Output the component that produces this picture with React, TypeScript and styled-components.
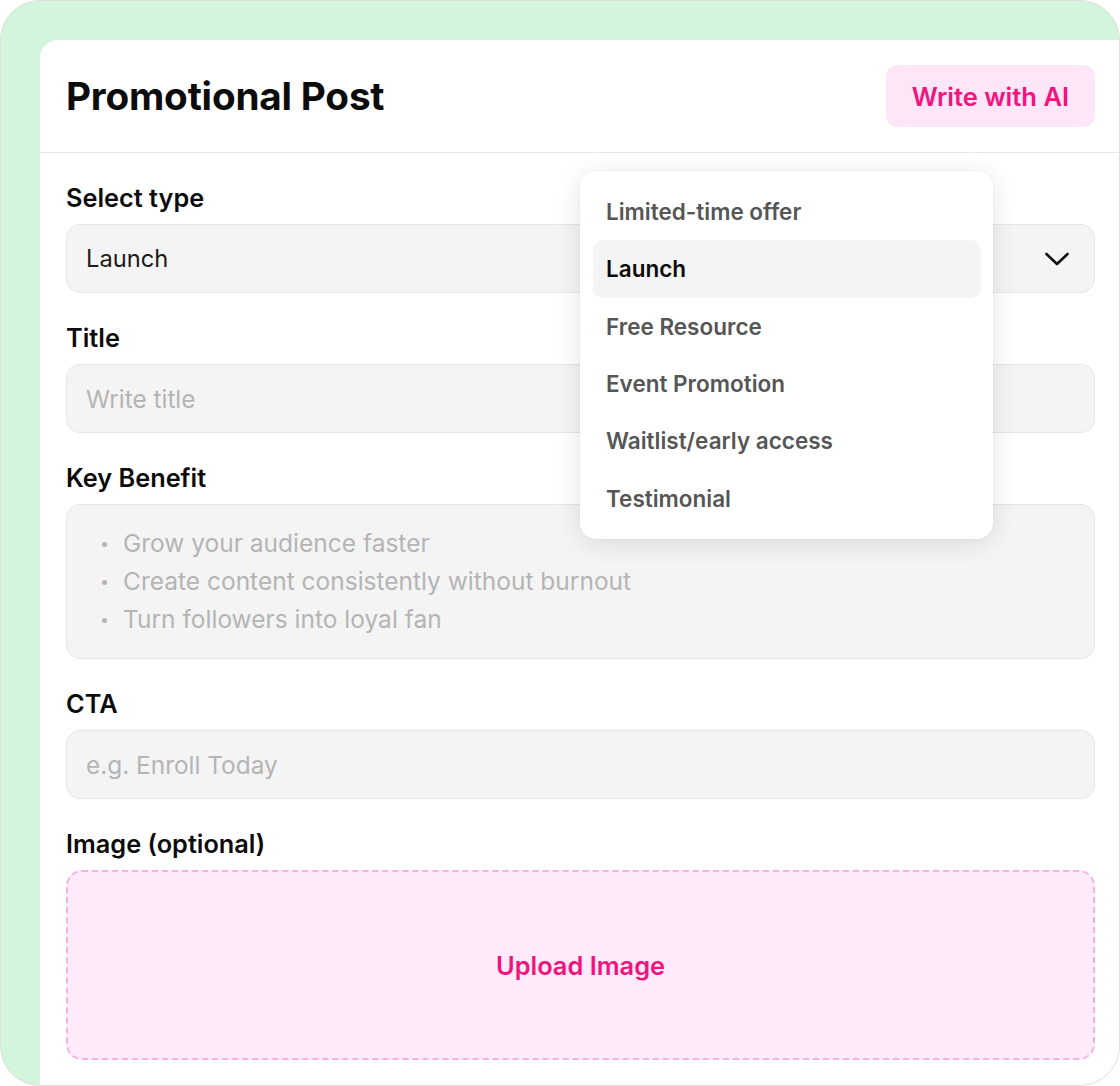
import styled, { createGlobalStyle } from 'styled-components'

const GlobalStyle = createGlobalStyle`
  html, body {
    margin: 0;
    padding: 0;
    background: #ffffff;
  }
  body {
    font-family: Inter, "Noto Sans", "Liberation Sans", sans-serif;
  }
  * {
    box-sizing: border-box;
  }
`

const Frame = styled.div`
  width: 1120px;
  height: 1086px;
  background: #d3f5dc;
  border: 1px solid #dedede;
  border-radius: 40px;
  padding: 39px 0 0 39px;
  overflow: hidden;
  display: flex;
`

const Card = styled.div`
  flex: 1;
  background: #ffffff;
  border-top-left-radius: 18px;
  display: flex;
  flex-direction: column;
`

const Header = styled.div`
  height: 113px;
  display: flex;
  align-items: center;
  justify-content: space-between;
  padding: 0 24px 0 26px;
  border-bottom: 1px solid #e6e6e6;
`

const Title = styled.h1`
  margin: 0;
  font-size: 38.7px;
  font-weight: 700;
  color: #0c0c0c;
  letter-spacing: -0.2px;
`

const AiButton = styled.button`
  height: 62px;
  padding: 0 26px;
  border: none;
  border-radius: 12px;
  background: #fde6f7;
  color: #f0147c;
  font-family: inherit;
  font-size: 25.5px;
  font-weight: 600;
  cursor: pointer;
`

const Body = styled.div`
  position: relative;
  display: flex;
  flex-direction: column;
  gap: 31px;
  padding: 31px 24px 24px 26px;
`

const Field = styled.div`
  display: flex;
  flex-direction: column;
  gap: 13px;
`

const Label = styled.label`
  font-size: 25.3px;
  line-height: 27px;
  font-weight: 600;
  color: #0c0c0c;
`

const Box = styled.div`
  height: 69px;
  display: flex;
  align-items: center;
  justify-content: space-between;
  padding: 0 24px 0 19px;
  background: #f4f4f4;
  border: 1px solid #e6e6e6;
  border-radius: 14px;
  font-size: 23.7px;
  color: #1c1c1c;
`

const Input = styled.input`
  height: 69px;
  padding: 0 19px;
  background: #f4f4f4;
  border: 1px solid #e6e6e6;
  border-radius: 14px;
  font-family: inherit;
  font-size: 24.4px;
  color: #1c1c1c;
  outline: none;

  &::placeholder {
    color: #b4b4b4;
  }
`

const TextArea = styled.div`
  height: 155px;
  padding: 19px 19px 0 33px;
  background: #f4f4f4;
  border: 1px solid #e6e6e6;
  border-radius: 14px;
`

const BulletItem = styled.div`
  display: flex;
  align-items: center;
  height: 38px;
  font-size: 24.5px;
  color: #b4b4b4;

  &::before {
    content: '•';
    width: 23px;
    font-size: 16px;
  }
`

const Upload = styled.div`
  height: 190px;
  display: flex;
  align-items: center;
  justify-content: center;
  background: #fdeafb;
  border: 2px dashed #f5b0e4;
  border-radius: 16px;
  color: #f0147c;
  font-size: 25.4px;
  font-weight: 600;
`

const Menu = styled.div`
  position: absolute;
  top: 18px;
  left: 540px;
  width: 413px;
  padding: 12px 12px 12px 13px;
  background: #ffffff;
  border-radius: 16px;
  box-shadow: 0 4px 26px rgba(0, 0, 0, 0.11), 0 0 0 1px rgba(0, 0, 0, 0.02);
  display: flex;
  flex-direction: column;
`

const MenuItem = styled.div<{ $active?: boolean }>`
  height: 57.3px;
  display: flex;
  align-items: center;
  padding: 0 13px;
  border-radius: 10px;
  font-size: 22.5px;
  font-weight: 600;
  color: ${(p) => (p.$active ? '#0c0c0c' : '#565656')};
  background: ${(p) => (p.$active ? '#f4f4f4' : 'transparent')};
`

const types = [
  'Limited-time offer',
  'Launch',
  'Free Resource',
  'Event Promotion',
  'Waitlist/early access',
  'Testimonial',
]

const benefits = [
  'Grow your audience faster',
  'Create content consistently without burnout',
  'Turn followers into loyal fan',
]

function Chevron() {
  return (
    <svg width="26" height="16" viewBox="0 0 26 16" fill="none">
      <path d="M2.5 3l10.5 10L23.5 3" stroke="#111" strokeWidth="2.6" strokeLinecap="round" strokeLinejoin="round" />
    </svg>
  )
}

export default function App() {
  const selected = 'Launch'

  return (
    <>
      <GlobalStyle />
      <Frame>
        <Card>
          <Header>
            <Title>Promotional Post</Title>
            <AiButton>Write with AI</AiButton>
          </Header>

          <Body>
            <Field>
              <Label>Select type</Label>
              <Box>
                <span>{selected}</span>
                <Chevron />
              </Box>
            </Field>

            <Field>
              <Label>Title</Label>
              <Input placeholder="Write title" />
            </Field>

            <Field>
              <Label>Key Benefit</Label>
              <TextArea>
                {benefits.map((b) => (
                  <BulletItem key={b}>{b}</BulletItem>
                ))}
              </TextArea>
            </Field>

            <Field>
              <Label>CTA</Label>
              <Input placeholder="e.g. Enroll Today" />
            </Field>

            <Field>
              <Label>Image (optional)</Label>
              <Upload>Upload Image</Upload>
            </Field>

            <Menu>
              {types.map((t) => (
                <MenuItem key={t} $active={t === selected}>
                  {t}
                </MenuItem>
              ))}
            </Menu>
          </Body>
        </Card>
      </Frame>
    </>
  )
}
